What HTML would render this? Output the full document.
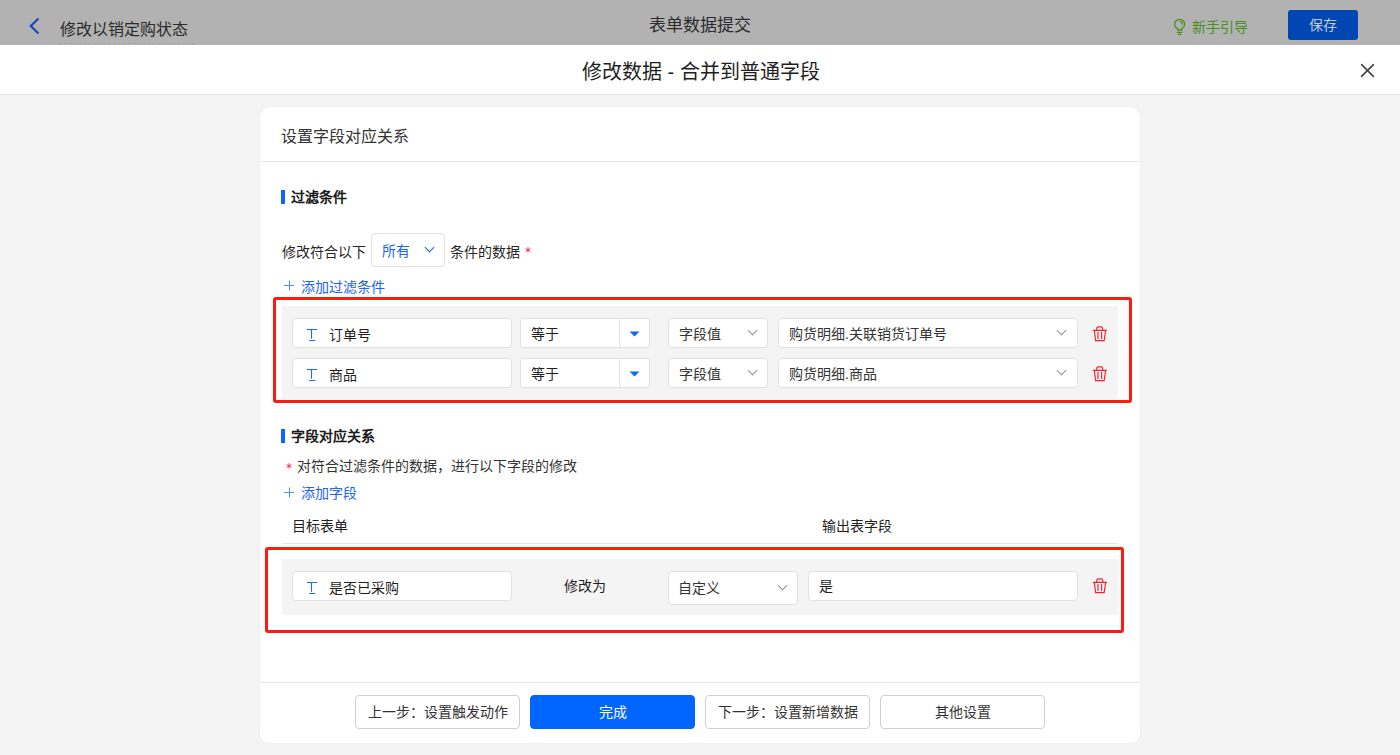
<!DOCTYPE html>
<html lang="zh-CN">
<head>
<meta charset="utf-8">
<style>
*{box-sizing:border-box;margin:0;padding:0}
html,body{width:1400px;height:755px;overflow:hidden}
body{position:relative;background:#f4f4f4;font-family:"Liberation Sans",sans-serif;color:#262626;font-size:14px}
.a{position:absolute;white-space:nowrap}
.topbar{left:0;top:0;width:1400px;height:45px;background:#b2b2b2}
.mhead{left:0;top:45px;width:1400px;height:50px;background:#fff;border-bottom:1px solid #e3e3e3}
.card{left:260px;top:107px;width:880px;height:636px;background:#fff;border-radius:9px;box-shadow:0 0 1.5px rgba(0,0,0,.09)}
.inp{background:#fff;border:1px solid #e1e1e1;border-radius:4px}
.red{border:3px solid #fe1a0e;border-radius:3px}
.gray{background:#f4f4f4}
.bar{background:#0a66ff;width:4px;height:14px}
.sect{font-weight:bold;color:#1a1a1a;font-size:14px}
.link{color:#1d62fa}
.btn{height:34px;width:165px;border:1px solid #cfcfcf;border-radius:4px;background:#fff;text-align:center;line-height:32px;font-size:14px;color:#333}
.btn.pri{background:#0066ff;border-color:#0066ff;color:#fff}
.chev{position:absolute;width:7px;height:7px;border-right:1.3px solid #8d929c;border-bottom:1.3px solid #8d929c;transform:rotate(45deg)}
</style>
</head>
<body>
<!-- top bar -->
<div class="a topbar"></div>
<svg class="a" style="left:28px;top:17px" width="13" height="18" viewBox="0 0 13 18"><path d="M10.5 1.5 L2.8 9 L10.5 16.5" fill="none" stroke="#1747b8" stroke-width="2.2"/></svg>
<div class="a" style="left:60px;top:19px;font-size:16px;line-height:22px;color:#2b2b2b">修改以销定购状态</div>
<div class="a" style="left:59px;top:43px;width:136px;height:1px;border-top:1px dashed #a4a4a4"></div>
<div class="a" style="left:649px;top:15px;font-size:17px;line-height:22px;color:#2b2b2b">表单数据提交</div>
<svg class="a" style="left:1168px;top:14px" width="24" height="24" viewBox="0 0 24 24"><path d="M9.6 16V14.6C7.9 13.6 6.6 12.2 6.6 10.4A5.05 5.05 0 0 1 16.7 10.4C16.7 12.2 15.4 13.6 13.7 14.6V16Z" fill="none" stroke="#48901a" stroke-width="1.3" stroke-linejoin="round"/><path d="M11.9 7.3A3.2 3.2 0 0 1 14.5 10.3" fill="none" stroke="#48901a" stroke-width="1.2" stroke-linecap="round"/><path d="M9.4 18.3H13.9M10.4 20.3H12.9" stroke="#48901a" stroke-width="1.2" stroke-linecap="round"/></svg>
<div class="a" style="left:1192px;top:17px;font-size:14px;line-height:20px;color:#48901a">新手引导</div>
<div class="a" style="left:1288px;top:10px;width:70px;height:30px;background:#0047b3;border-radius:3px;color:#c6c9d2;font-size:14px;line-height:30px;text-align:center">保存</div>

<!-- modal header -->
<div class="a mhead"></div>
<div class="a" style="left:582px;top:58px;font-size:20px;line-height:28px;color:#1f1f1f">修改数据 - 合并到普通字段</div>
<svg class="a" style="left:1360px;top:62.5px" width="15" height="15" viewBox="0 0 15 15"><path d="M1.6 1.6L13.4 13.4M13.4 1.6L1.6 13.4" stroke="#444" stroke-width="1.6" stroke-linecap="round"/></svg>

<!-- card -->
<div class="a card"></div>
<div class="a" style="left:281px;top:126px;font-size:16px;line-height:22px;color:#333">设置字段对应关系</div>
<div class="a" style="left:260px;top:161px;width:880px;height:1px;background:#e8e8e8"></div>

<div class="a bar" style="left:281px;top:190px"></div>
<div class="a sect" style="left:291px;top:187px;line-height:20px">过滤条件</div>

<div class="a" style="left:282px;top:242px;line-height:20px">修改符合以下</div>
<div class="a inp" style="left:371px;top:233px;width:74px;height:34px"></div>
<div class="a" style="left:382px;top:241px;line-height:20px;color:#1d62fa">所有</div>
<div class="chev" style="left:426px;top:244px;border-color:#1d62fa"></div>
<div class="a" style="left:450px;top:242px;line-height:20px">条件的数据</div>
<svg class="a" style="left:525px;top:247px" width="6" height="6" viewBox="0 0 6 6"><path d="M3 0.2V5.6M0.6 1.5L5.4 4.3M0.6 4.3L5.4 1.5" stroke="#f5224a" stroke-width="0.9"/></svg>
<svg class="a" style="left:284px;top:280px" width="11" height="11" viewBox="0 0 11 11"><path d="M0 5.5H10M5.5 0.5V10.5" stroke="#5a8af7" stroke-width="1"/></svg>
<div class="a link" style="left:301px;top:277px;line-height:20px">添加过滤条件</div>

<div class="a red" style="left:273px;top:297px;width:859px;height:106px"></div>
<div class="a gray" style="left:282px;top:306px;width:836px;height:93px"></div>

<!-- filter rows -->
<div class="a inp" style="left:292px;top:318px;width:220px;height:30px"></div>
<div class="a" style="left:307px;top:329px;width:10px;height:13px" ><svg width="11" height="13" viewBox="0 0 11 13"><path d="M0 0.5H10.2M4.5 0.5V9.7M2.2 11.5H8.3" fill="none" stroke="#1a66ff" stroke-width="1.1"/></svg></div>
<div class="a" style="left:329px;top:325px;line-height:20px;color:#1f1f1f">订单号</div>
<div class="a inp" style="left:520px;top:318px;width:130px;height:30px;border-radius:2px"></div>
<div class="a" style="left:619px;top:319px;width:1px;height:28px;background:#e1e1e1"></div>
<div class="a" style="left:531px;top:324px;line-height:20px;color:#1f1f1f">等于</div>
<svg class="a" style="left:629px;top:331px" width="11" height="6" viewBox="0 0 11 6"><path d="M0.5 0.5H10.5L5.5 5.5Z" fill="#0a66ff"/></svg>
<div class="a inp" style="left:668px;top:318px;width:100px;height:30px"></div>
<div class="a" style="left:679px;top:324px;line-height:20px;color:#333">字段值</div>
<div class="chev" style="left:749px;top:327px"></div>
<div class="a inp" style="left:778px;top:318px;width:300px;height:30px"></div>
<div class="a" style="left:789px;top:324px;line-height:20px;color:#333">购货明细.关联销货订单号</div>
<div class="chev" style="left:1058px;top:327px"></div>
<svg class="a trash" style="left:1092px;top:326px" width="16" height="17" viewBox="0 0 16 17"><path d="M4.8 4.3V2.4A1.6 1.6 0 0 1 6.4 0.8H9.1A1.6 1.6 0 0 1 10.7 2.4V4.3M0.8 4.4H14.9M2.4 4.6L3.6 14.6H12.2L13.6 4.6" fill="none" stroke="#f5222d" stroke-width="1.15"/><path d="M6 6.2V12.4M9.6 6.2V12.4" fill="none" stroke="#f5222d" stroke-width="1.15" stroke-linecap="round"/></svg>

<div class="a inp" style="left:292px;top:358px;width:220px;height:30px"></div>
<div class="a" style="left:307px;top:369px;width:10px;height:13px" ><svg width="11" height="13" viewBox="0 0 11 13"><path d="M0 0.5H10.2M4.5 0.5V9.7M2.2 11.5H8.3" fill="none" stroke="#1a66ff" stroke-width="1.1"/></svg></div>
<div class="a" style="left:329px;top:365px;line-height:20px;color:#1f1f1f">商品</div>
<div class="a inp" style="left:520px;top:358px;width:130px;height:30px;border-radius:2px"></div>
<div class="a" style="left:619px;top:359px;width:1px;height:28px;background:#e1e1e1"></div>
<div class="a" style="left:531px;top:364px;line-height:20px;color:#1f1f1f">等于</div>
<svg class="a" style="left:629px;top:371px" width="11" height="6" viewBox="0 0 11 6"><path d="M0.5 0.5H10.5L5.5 5.5Z" fill="#0a66ff"/></svg>
<div class="a inp" style="left:668px;top:358px;width:100px;height:30px"></div>
<div class="a" style="left:679px;top:364px;line-height:20px;color:#333">字段值</div>
<div class="chev" style="left:749px;top:367px"></div>
<div class="a inp" style="left:778px;top:358px;width:300px;height:30px"></div>
<div class="a" style="left:789px;top:364px;line-height:20px;color:#333">购货明细.商品</div>
<div class="chev" style="left:1058px;top:367px"></div>
<svg class="a trash" style="left:1092px;top:366px" width="16" height="17" viewBox="0 0 16 17"><path d="M4.8 4.3V2.4A1.6 1.6 0 0 1 6.4 0.8H9.1A1.6 1.6 0 0 1 10.7 2.4V4.3M0.8 4.4H14.9M2.4 4.6L3.6 14.6H12.2L13.6 4.6" fill="none" stroke="#f5222d" stroke-width="1.15"/><path d="M6 6.2V12.4M9.6 6.2V12.4" fill="none" stroke="#f5222d" stroke-width="1.15" stroke-linecap="round"/></svg>

<!-- section 2 -->
<div class="a bar" style="left:281px;top:429px"></div>
<div class="a sect" style="left:291px;top:426px;line-height:20px">字段对应关系</div>
<svg class="a" style="left:286px;top:463px" width="6" height="6" viewBox="0 0 6 6"><path d="M3 0.2V5.6M0.6 1.5L5.4 4.3M0.6 4.3L5.4 1.5" stroke="#f5224a" stroke-width="0.9"/></svg>
<div class="a" style="left:297px;top:456px;line-height:20px;color:#333">对符合过滤条件的数据，进行以下字段的修改</div>
<svg class="a" style="left:284px;top:487px" width="11" height="11" viewBox="0 0 11 11"><path d="M0 5.5H10M5.5 0.5V10.5" stroke="#5a8af7" stroke-width="1"/></svg>
<div class="a link" style="left:301px;top:483px;line-height:20px">添加字段</div>
<div class="a" style="left:292px;top:516px;line-height:20px;color:#1f1f1f">目标表单</div>
<div class="a" style="left:822px;top:516px;line-height:20px;color:#1f1f1f">输出表字段</div>
<div class="a" style="left:282px;top:543px;width:836px;height:1px;background:#e6e6e6"></div>

<div class="a red" style="left:265px;top:547px;width:859px;height:86px"></div>
<div class="a gray" style="left:282px;top:559px;width:836px;height:56px"></div>
<div class="a inp" style="left:292px;top:571px;width:220px;height:30px"></div>
<div class="a" style="left:307px;top:582px;width:10px;height:13px" ><svg width="11" height="13" viewBox="0 0 11 13"><path d="M0 0.5H10.2M4.5 0.5V9.7M2.2 11.5H8.3" fill="none" stroke="#1a66ff" stroke-width="1.1"/></svg></div>
<div class="a" style="left:329px;top:578px;line-height:20px;color:#1f1f1f">是否已采购</div>
<div class="a" style="left:564px;top:576px;line-height:20px;color:#1f1f1f">修改为</div>
<div class="a inp" style="left:668px;top:571px;width:130px;height:34px"></div>
<div class="a" style="left:678px;top:578px;line-height:20px;color:#333">自定义</div>
<div class="chev" style="left:779px;top:582px"></div>
<div class="a inp" style="left:808px;top:571px;width:270px;height:30px"></div>
<div class="a" style="left:819px;top:576px;line-height:20px;color:#1f1f1f">是</div>
<svg class="a trash" style="left:1092px;top:578px" width="16" height="17" viewBox="0 0 16 17"><path d="M4.8 4.3V2.4A1.6 1.6 0 0 1 6.4 0.8H9.1A1.6 1.6 0 0 1 10.7 2.4V4.3M0.8 4.4H14.9M2.4 4.6L3.6 14.6H12.2L13.6 4.6" fill="none" stroke="#f5222d" stroke-width="1.15"/><path d="M6 6.2V12.4M9.6 6.2V12.4" fill="none" stroke="#f5222d" stroke-width="1.15" stroke-linecap="round"/></svg>

<!-- footer -->
<div class="a" style="left:260px;top:682px;width:880px;height:1px;background:#e8e8e8"></div>
<div class="a btn" style="left:355px;top:695px">上一步：设置触发动作</div>
<div class="a btn pri" style="left:530px;top:695px">完成</div>
<div class="a btn" style="left:705px;top:695px">下一步：设置新增数据</div>
<div class="a btn" style="left:880px;top:695px">其他设置</div>
</body>
</html>
